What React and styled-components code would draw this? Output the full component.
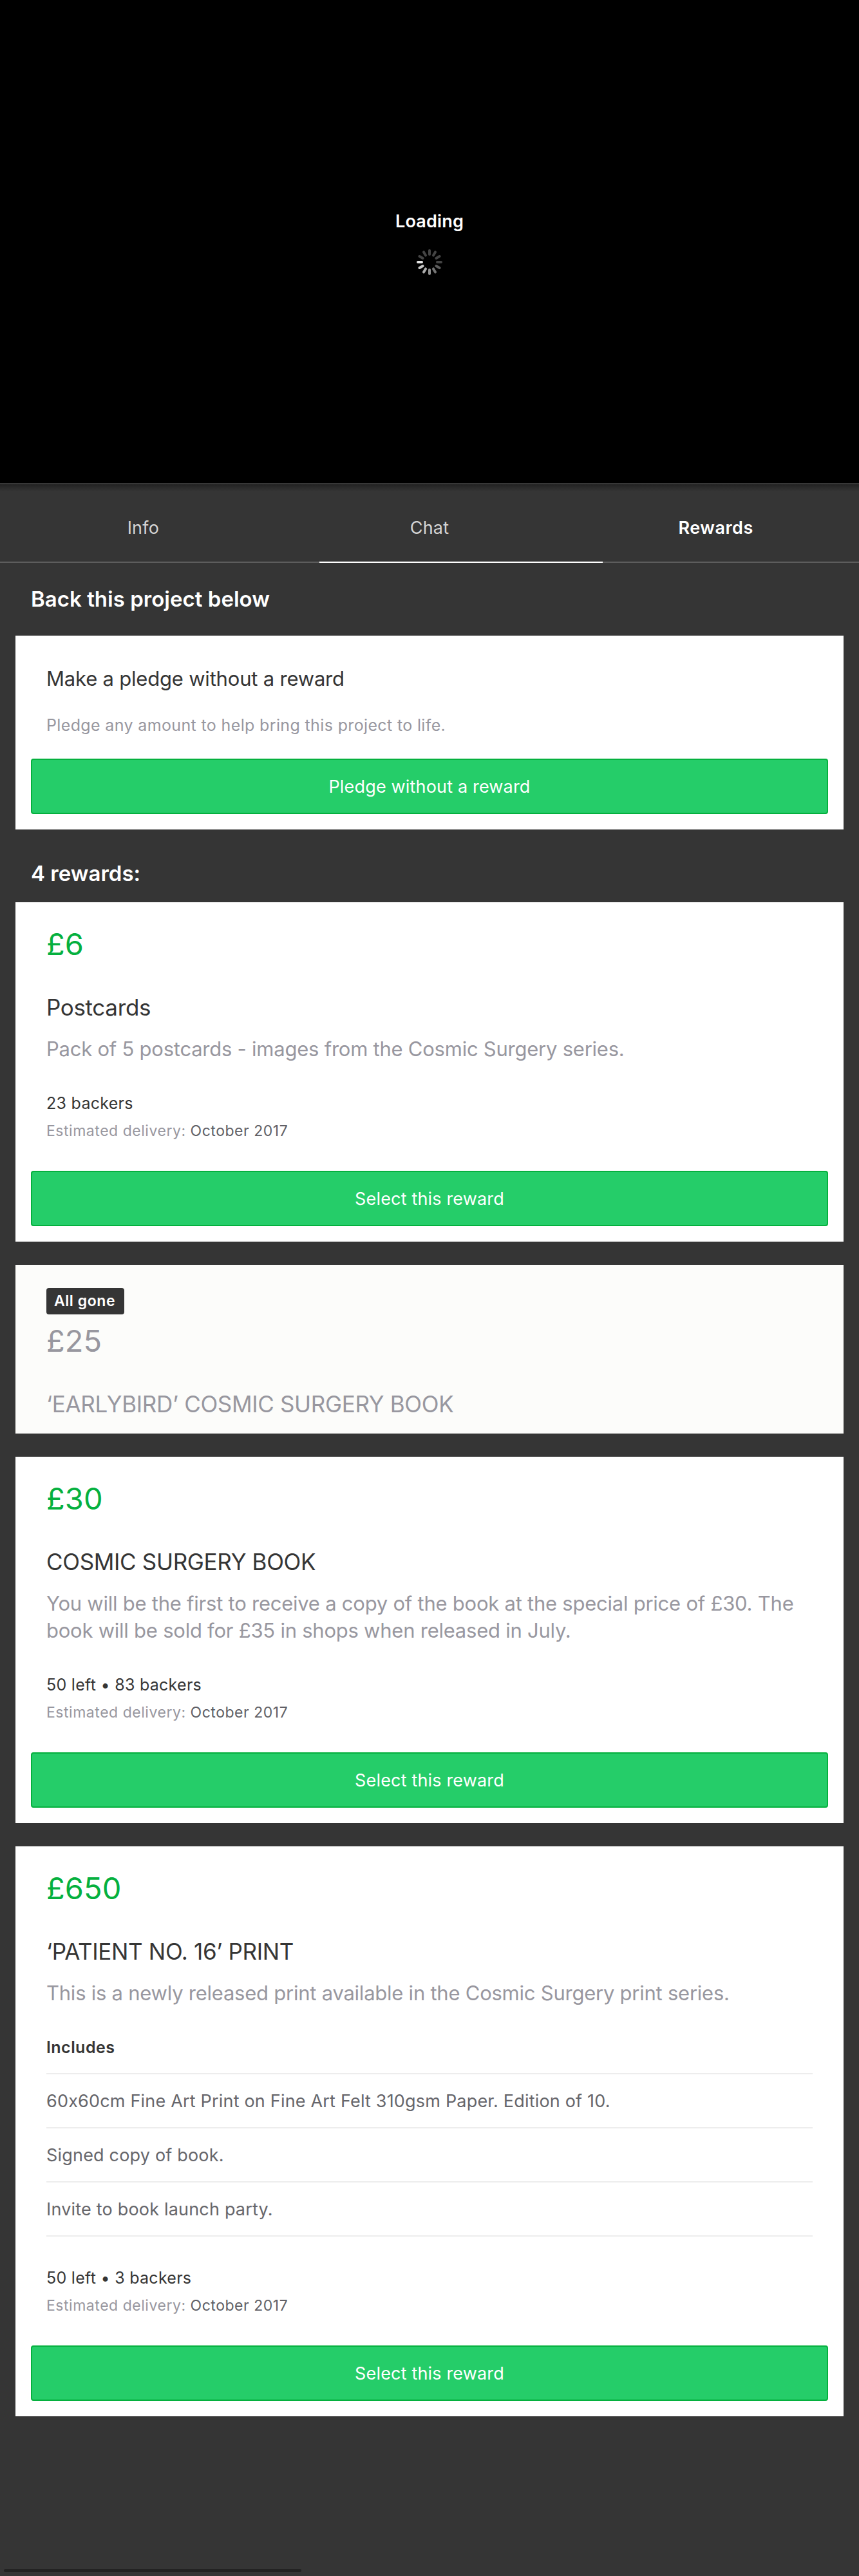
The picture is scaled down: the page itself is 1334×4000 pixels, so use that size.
import React from "react";
import styled, { createGlobalStyle } from "styled-components";

const GlobalStyle = createGlobalStyle`
  *, *::before, *::after { box-sizing: border-box; }
  body { margin: 0; background: #353535; }
  h2, h3, p, ul { margin: 0; padding: 0; }
`;

const Page = styled.div`
  position: relative;
  min-height: 4000px;
  background: #353535;
  font-family: Inter, Roboto, "Liberation Sans", sans-serif;
  font-weight: 400;
`;

const Player = styled.div`
  height: 752px;
  padding-top: 324px;
  display: flex;
  flex-direction: column;
  align-items: center;
  gap: 23px;
  background: #000;
  border-bottom: 2px solid #383838;
`;

const LoadingLabel = styled.div`
  font-size: 27px;
  line-height: 40px;
  font-weight: 600;
  letter-spacing: 0.18px;
  color: #fff;
`;

const Tabs = styled.nav`
  position: relative;
  display: grid;
  grid-template-columns: repeat(3, 1fr);
  height: 122px;
  padding-top: 48px;
  border-bottom: 2px solid #5d5d5d;
  background: linear-gradient(#222 0, #2b2b2b 5px, #353535 11px);
`;

const Tab = styled.div`
  font-size: 27px;
  line-height: 40px;
  text-align: center;
  font-weight: ${(p) => (p.$active ? 600 : 400)};
  letter-spacing: ${(p) => (p.$active ? "0.5px" : "0.2px")};
  color: ${(p) => (p.$active ? "#fff" : "#d4d4d4")};
`;

const TabIndicator = styled.span`
  position: absolute;
  left: 496px;
  bottom: -2px;
  width: 440px;
  height: 2px;
  background: #fff;
`;

const SectionTitle = styled.h2`
  padding: ${(p) => p.$padding};
  font-size: 33px;
  line-height: 40px;
  font-weight: 600;
  letter-spacing: 0.02px;
  color: #fff;
`;

const RewardList = styled.div`
  display: flex;
  flex-direction: column;
  gap: 36px;
`;

const Card = styled.section`
  margin: 0 24px;
  padding: ${(p) => p.$top || 37}px 24px 24px;
  display: flex;
  flex-direction: column;
  background: ${(p) => (p.$muted ? "#fcfcfa" : "#fff")};
`;

const Body = styled.div`
  display: flex;
  flex-direction: column;
  align-items: stretch;
  padding: 0 24px;
`;

const PledgeTitle = styled.h3`
  font-size: 31px;
  line-height: 38px;
  font-weight: 400;
  letter-spacing: -0.2px;
  color: #353535;
`;

const PledgeNote = styled.p`
  margin: 37px 0 36px;
  font-size: 25px;
  line-height: 32px;
  letter-spacing: 0.36px;
  color: #98979f;
`;

const Button = styled.button`
  height: 86px;
  padding: 1px 0 0;
  border: 2px solid #05b03e;
  border-radius: 4px;
  background: #25cd69;
  font: inherit;
  font-size: 27px;
  line-height: 40px;
  letter-spacing: 0.17px;
  color: #fff;
`;

const Badge = styled.span`
  align-self: flex-start;
  width: 121px;
  height: 41px;
  margin-bottom: 13px;
  padding-left: 12px;
  border-radius: 4px;
  background: #353535;
  font-size: 23px;
  line-height: 41px;
  font-weight: 600;
  letter-spacing: 0.55px;
  color: #fff;
`;

const Price = styled.div`
  font-size: 47px;
  line-height: 56px;
  letter-spacing: 0.1px;
  color: ${(p) => (p.$muted ? "#98979f" : "#05b03e")};
`;

const RewardTitle = styled.h3`
  margin-top: 48px;
  font-size: 35px;
  line-height: 44px;
  font-weight: 400;
  letter-spacing: -0.34px;
  color: ${(p) => (p.$muted ? "#98979f" : "#353535")};
`;

const Description = styled.p`
  margin-top: 22px;
  font-size: 31px;
  line-height: 42px;
  letter-spacing: -0.24px;
  color: #98979f;
`;

const IncludesLabel = styled.div`
  margin: 42px 0 19px;
  font-size: 25px;
  line-height: 42px;
  font-weight: 600;
  letter-spacing: 0.45px;
  color: #353535;
`;

const Items = styled.ul`
  list-style: none;
  border-top: 2px solid #ededed;
  margin-bottom: 1px;
`;

const Item = styled.li`
  height: 84px;
  padding-top: 1px;
  border-bottom: 2px solid #ededed;
  font-size: 27px;
  line-height: 82px;
  letter-spacing: 0.19px;
  color: #66666b;
`;

const Backers = styled.div`
  margin-top: 42px;
  font-size: 25px;
  line-height: 42px;
  letter-spacing: 0.28px;
  color: #353535;
`;

const Delivery = styled.div`
  margin: 1px 0 41px;
  font-size: 23px;
  line-height: 42px;
  letter-spacing: 0.53px;
  color: #98979f;
`;

const DeliveryDate = styled.span`
  color: #606066;
`;

const ScrollThumb = styled.div`
  position: absolute;
  left: 6px;
  bottom: 6px;
  width: 462px;
  height: 5px;
  border-radius: 3px;
  background: #222;
`;

const SPOKES = [
  "#444", "#444", "#444", "#444", "#5c5c5c", "#747474",
  "#929292", "#adadad", "#c6c6c6", "#e6e6e6", "#444", "#444",
];

function Spinner() {
  return (
    <svg width="40" height="40" viewBox="0 0 40 40" aria-hidden="true">
      {SPOKES.map((color, i) => (
        <line
          key={i}
          x1="20"
          y1="2"
          x2="20"
          y2="8"
          stroke={color}
          strokeWidth="4"
          strokeLinecap="round"
          transform={`rotate(${i * 30} 20 20)`}
        />
      ))}
    </svg>
  );
}

const REWARDS = [
  {
    price: "£6",
    title: "Postcards",
    description: "Pack of 5 postcards - images from the Cosmic Surgery series.",
    backers: "23 backers",
  },
  { price: "£25", title: "‘EARLYBIRD’ COSMIC SURGERY BOOK", gone: true },
  {
    price: "£30",
    title: "COSMIC SURGERY BOOK",
    description:
      "You will be the first to receive a copy of the book at the special price of £30. The book will be sold for £35 in shops when released in July.",
    backers: "50 left • 83 backers",
  },
  {
    price: "£650",
    title: "‘PATIENT NO. 16’ PRINT",
    description:
      "This is a newly released print available in the Cosmic Surgery print series.",
    includes: [
      "60x60cm Fine Art Print on Fine Art Felt 310gsm Paper. Edition of 10.",
      "Signed copy of book.",
      "Invite to book launch party.",
    ],
    backers: "50 left • 3 backers",
  },
];

function Reward({ price, title, description, includes, backers, gone }) {
  return (
    <Card $muted={gone} $top={gone ? 36 : 37}>
      <Body>
        {gone && <Badge>All gone</Badge>}
        <Price $muted={gone}>{price}</Price>
        <RewardTitle $muted={gone}>{title}</RewardTitle>
        {description && <Description>{description}</Description>}
        {includes && (
          <>
            <IncludesLabel>Includes</IncludesLabel>
            <Items>
              {includes.map((item) => (
                <Item key={item}>{item}</Item>
              ))}
            </Items>
          </>
        )}
        {backers && (
          <>
            <Backers>{backers}</Backers>
            <Delivery>
              Estimated delivery: <DeliveryDate>October 2017</DeliveryDate>
            </Delivery>
          </>
        )}
      </Body>
      {!gone && <Button>Select this reward</Button>}
    </Card>
  );
}

export default function App() {
  return (
    <Page>
      <GlobalStyle />
      <Player>
        <LoadingLabel>Loading</LoadingLabel>
        <Spinner />
      </Player>
      <Tabs>
        <Tab>Info</Tab>
        <Tab>Chat</Tab>
        <Tab $active>Rewards</Tab>
        <TabIndicator />
      </Tabs>
      <SectionTitle $padding="36px 48px 37px">Back this project below</SectionTitle>
      <Card $top={48}>
        <Body>
          <PledgeTitle>Make a pledge without a reward</PledgeTitle>
          <PledgeNote>Pledge any amount to help bring this project to life.</PledgeNote>
        </Body>
        <Button>Pledge without a reward</Button>
      </Card>
      <SectionTitle $padding="48px 48px 25px">4 rewards:</SectionTitle>
      <RewardList>
        {REWARDS.map((reward) => (
          <Reward key={reward.price} {...reward} />
        ))}
      </RewardList>
      <ScrollThumb />
    </Page>
  );
}
